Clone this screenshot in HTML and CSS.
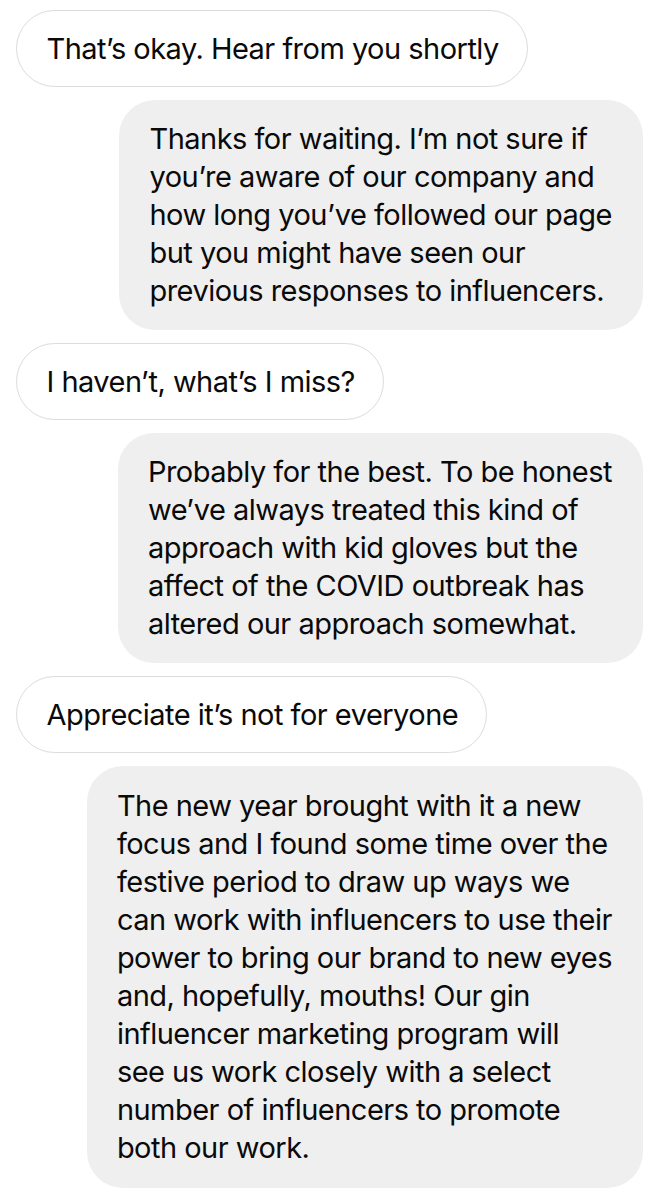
FILE: index.html
```html
<!DOCTYPE html>
<html lang="en">
<head>
<meta charset="utf-8">
<title>Chat</title>
<link rel="stylesheet" href="styles.css">
</head>
<body>
<main class="thread">
  <div class="msg msg-in"><span class="line">That’s okay. Hear from you shortly</span></div>
  <div class="msg msg-out">
    <span class="line">Thanks for waiting. I’m not sure if</span>
    <span class="line">you’re aware of our company and</span>
    <span class="line">how long you’ve followed our page</span>
    <span class="line">but you might have seen our</span>
    <span class="line">previous responses to influencers.</span>
  </div>
  <div class="msg msg-in"><span class="line">I haven’t, what’s I miss?</span></div>
  <div class="msg msg-out">
    <span class="line">Probably for the best. To be honest</span>
    <span class="line">we’ve always treated this kind of</span>
    <span class="line">approach with kid gloves but the</span>
    <span class="line">affect of the COVID outbreak has</span>
    <span class="line">altered our approach somewhat.</span>
  </div>
  <div class="msg msg-in"><span class="line">Appreciate it’s not for everyone</span></div>
  <div class="msg msg-out msg-long">
    <span class="line">The new year brought with it a new</span>
    <span class="line">focus and I found some time over the</span>
    <span class="line">festive period to draw up ways we</span>
    <span class="line">can work with influencers to use their</span>
    <span class="line">power to bring our brand to new eyes</span>
    <span class="line">and, hopefully, mouths! Our gin</span>
    <span class="line">influencer marketing program will</span>
    <span class="line">see us work closely with a select</span>
    <span class="line">number of influencers to promote</span>
    <span class="line">both our work.</span>
  </div>
</main>
</body>
</html>
```

FILE: styles.css
```css
html, body {
  margin: 0;
  padding: 0;
  background: #ffffff;
}

body {
  width: 666px;
  height: 1200px;
  overflow: hidden;
  font-family: Inter, "Noto Sans", "Liberation Sans", sans-serif;
  font-size: 29px;
  line-height: 38px;
  color: #0a0a0a;
  letter-spacing: -0.52px;
}

.thread {
  display: flex;
  flex-direction: column;
  gap: 13px;
  padding: 10px 23px 0 16px;
}

.msg {
  display: flex;
  flex-direction: column;
  box-sizing: border-box;
}

.line {
  display: block;
  white-space: nowrap;
}

.msg-in {
  align-self: flex-start;
  background: #ffffff;
  border: 1.5px solid #dcdcdc;
  border-radius: 40px;
  padding: 18.5px 28px 18.5px 29.5px;
}

.msg-out {
  align-self: flex-end;
  background: #efefef;
  border-radius: 36px;
  padding: 20px 31px 20px 30px;
}

.msg-long {
  padding-top: 21px;
  padding-bottom: 21px;
}
```
